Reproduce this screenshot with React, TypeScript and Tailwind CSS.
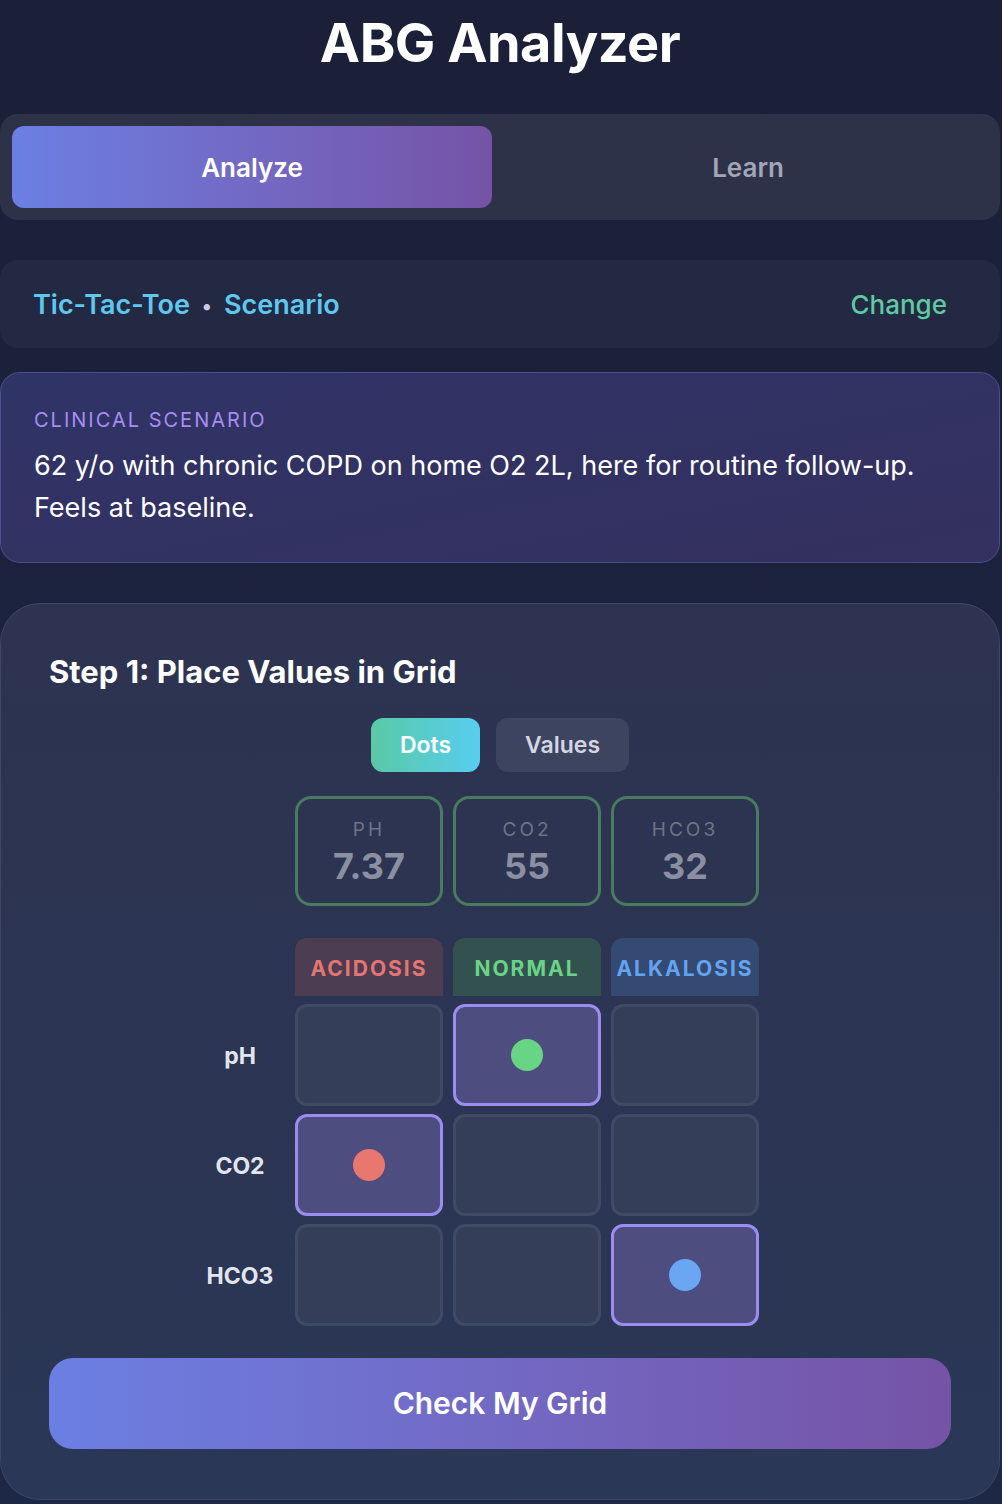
import { useState } from 'react';

const rows = [
  { label: 'pH', col: 1, dot: 'bg-[#68d585]' },
  { label: 'CO2', col: 0, dot: 'bg-[#e8776f]' },
  { label: 'HCO3', col: 2, dot: 'bg-[#6aa6f2]' },
];

const values = [
  { name: 'PH', value: '7.37' },
  { name: 'CO2', value: '55' },
  { name: 'HCO3', value: '32' },
];

export default function App() {
  const [tab, setTab] = useState<'analyze' | 'learn'>('analyze');
  const [mode, setMode] = useState<'dots' | 'values'>('dots');

  return (
    <div
      className="min-h-screen bg-gradient-to-b from-[#1b1f38] to-[#1d2846] text-white"
      style={{ fontFamily: 'Inter, "Noto Sans", "Liberation Sans", sans-serif' }}
    >
      <div className="w-[1000px]">
        {/* Title */}
        <h1 className="pt-[10px] h-[114px] text-center text-[54px] leading-[66px] font-bold tracking-[-0.5px]">
          ABG Analyzer
        </h1>

        {/* Tabs */}
        <div className="flex gap-4 p-3 rounded-[18px] bg-[#2d3249]">
          <button
            onClick={() => setTab('analyze')}
            className={`flex-1 h-[82px] rounded-[12px] text-[26px] font-semibold ${
              tab === 'analyze'
                ? 'bg-gradient-to-r from-[#6b7fe3] to-[#7553a6] text-white'
                : 'text-[#a3a6b8]'
            }`}
          >
            Analyze
          </button>
          <button
            onClick={() => setTab('learn')}
            className={`flex-1 h-[82px] rounded-[12px] text-[26px] font-semibold ${
              tab === 'learn'
                ? 'bg-gradient-to-r from-[#6b7fe3] to-[#7553a6] text-white'
                : 'text-[#a3a6b8]'
            }`}
          >
            Learn
          </button>
        </div>

        {/* Scenario bar */}
        <div className="mt-10 h-[88px] rounded-[18px] bg-[#232943] flex items-center justify-between pl-[33px] pr-[53px]">
          <div className="flex items-center gap-[12px] text-[27px] font-semibold text-[#5ec8ef] pt-[3px]">
            <span>Tic-Tac-Toe</span>
            <span className="text-[20px] text-[#c9cde0]">•</span>
            <span>Scenario</span>
          </div>
          <button className="text-[26px] font-medium text-[#5fc9a2]">Change</button>
        </div>

        {/* Clinical scenario */}
        <div className="mt-6 rounded-[20px] border border-[#4b4f8e] bg-gradient-to-br from-[#2f3466] to-[#34305f] pl-[33px] pr-[60px] pt-[35px] pb-[33px]">
          <div className="text-[20px] leading-[24px] tracking-[2px] text-[#a98cf2]">
            CLINICAL SCENARIO
          </div>
          <p className="mt-[13px] text-[27px] leading-[42px] text-white">
            62 y/o with chronic COPD on home O2 2L, here for routine follow-up. Feels at baseline.
          </p>
        </div>

        {/* Step card */}
        <div className="mt-[40px] rounded-[40px] border border-[#3f4764] bg-gradient-to-b from-[#2d3350] to-[#2a3756] px-[48px] pt-[44px] pb-[50px]">
          <h2 className="text-[31px] leading-[48px] font-bold text-white">Step 1: Place Values in Grid</h2>

          <div className="mt-[22px] flex justify-center gap-4">
            <button
              onClick={() => setMode('dots')}
              className={`h-[54px] px-[29px] rounded-[12px] text-[23px] font-semibold ${
                mode === 'dots'
                  ? 'bg-gradient-to-r from-[#5ac9a5] to-[#58cdf0] text-white'
                  : 'bg-[#3d4460] text-[#d3d6e2]'
              }`}
            >
              Dots
            </button>
            <button
              onClick={() => setMode('values')}
              className={`h-[54px] px-[29px] rounded-[12px] text-[23px] font-semibold ${
                mode === 'values'
                  ? 'bg-gradient-to-r from-[#5ac9a5] to-[#58cdf0] text-white'
                  : 'bg-[#3d4460] text-[#d3d6e2]'
              }`}
            >
              Values
            </button>
          </div>

          <div className="ml-[146px] mt-[24px] grid grid-cols-[90px_148px_148px_148px] gap-x-[10px]">
            {/* Value boxes */}
            <div />
            {values.map((v) => (
              <div
                key={v.name}
                className="h-[110px] rounded-[16px] border-[3px] border-[#4a7a60] flex flex-col items-center justify-center pt-[4px]"
              >
                <div className="text-[19px] leading-[22px] tracking-[3px] text-[#6e7389]">{v.name}</div>
                <div className="mt-[4px] text-[36px] leading-[42px] font-bold text-[#8b8fa1]">{v.value}</div>
              </div>
            ))}

            {/* Column headers */}
            <div className="mt-8" />
            <div className="mt-8 h-[58px] rounded-t-[12px] bg-[#4c3d52] flex items-center justify-center pt-[4px] text-[21px] font-bold tracking-[2px] text-[#e57572]">
              ACIDOSIS
            </div>
            <div className="mt-8 h-[58px] rounded-t-[12px] bg-[#33524f] flex items-center justify-center pt-[4px] text-[21px] font-bold tracking-[2px] text-[#6ad388]">
              NORMAL
            </div>
            <div className="mt-8 h-[58px] rounded-t-[12px] bg-[#344a72] flex items-center justify-center pt-[4px] text-[21px] font-bold tracking-[2px] text-[#64a3ef]">
              ALKALOSIS
            </div>

            {/* Grid rows */}
            {rows.map((r) => (
              <div key={r.label} className="contents">
                <div className="mt-2 h-[102px] flex items-center justify-center pt-[2px] text-[23px] font-bold text-[#e3e5ec]">
                  {r.label}
                </div>
                {[0, 1, 2].map((c) => (
                  <div
                    key={c}
                    className={`mt-2 h-[102px] rounded-[12px] border-[3px] flex items-center justify-center ${
                      c === r.col ? 'bg-[#4d4d80] border-[#9d8cf0]' : 'bg-[#343e58] border-[#414a64]'
                    }`}
                  >
                    {c === r.col && <div className={`w-[32px] h-[32px] rounded-full ${r.dot}`} />}
                  </div>
                ))}
              </div>
            ))}
          </div>

          <button className="mt-8 w-full h-[91px] rounded-[24px] bg-gradient-to-r from-[#6b7fe3] to-[#7553a6] text-[30px] font-semibold text-white">
            Check My Grid
          </button>
        </div>
      </div>
    </div>
  );
}
